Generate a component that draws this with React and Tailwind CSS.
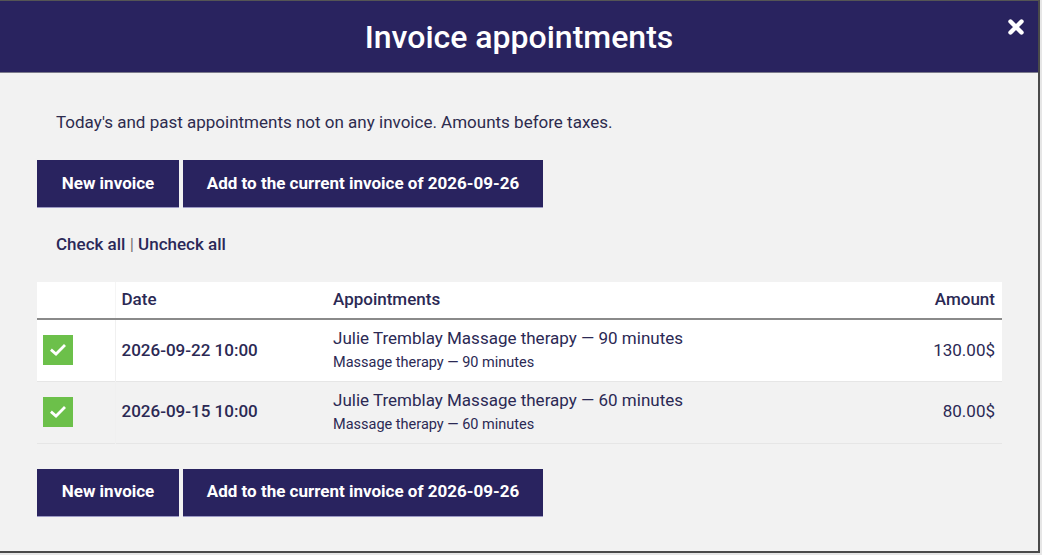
import React from "react";

const navy = "bg-[#29235f]";

function Check() {
  return (
    <div className="w-[30px] h-[30px] bg-[#6cc04a] flex items-center justify-center">
      <svg width="18" height="18" viewBox="0 0 18 18">
        <polyline points="3,9.5 7,13 15,5" fill="none" stroke="white" strokeWidth="2.8" strokeLinecap="square" />
      </svg>
    </div>
  );
}

function Buttons() {
  return (
    <div className="flex gap-[4px]">
      <button className={`${navy} text-white font-bold text-[17px] h-[48px] w-[142px] border-b border-[#9c99c4]`}>New invoice</button>
      <button className={`${navy} text-white font-bold text-[17px] h-[48px] w-[360px] border-b border-[#9c99c4]`}>Add to the current invoice of 2026-09-26</button>
    </div>
  );
}

const rows = [
  { date: "2026-09-22 10:00", title: "Julie Tremblay Massage therapy — 90 minutes", sub: "Massage therapy — 90 minutes", amount: "130.00$", bg: "bg-white" },
  { date: "2026-09-15 10:00", title: "Julie Tremblay Massage therapy — 60 minutes", sub: "Massage therapy — 60 minutes", amount: "80.00$", bg: "bg-[#f2f2f2]" },
];

export default function App() {
  return (
    <div className="w-[1042px] h-[555px] bg-[#e6e6e6] overflow-hidden" style={{ fontFamily: "Roboto, 'Noto Sans', sans-serif" }}>
      <div className="w-[1040px] h-[553px] bg-[#f2f2f2] border-r-2 border-b-2 border-[#4a4a4a] border-t border-t-[#555] flex flex-col text-[#2b2954]">
        <div className={`relative ${navy} h-[72px] shrink-0 flex items-center justify-center border-b border-[#7c7b8c]`}>
          <h1 className="text-white text-[32px] font-medium leading-none">Invoice appointments</h1>
          <div className="absolute right-[12px] top-[16px] w-[20px] h-[20px] flex items-center justify-center">
            <svg width="18" height="18" viewBox="0 0 18 18">
              <path d="M3.5 3.5 L14.5 14.5 M14.5 3.5 L3.5 14.5" stroke="white" strokeWidth="4.4" strokeLinecap="round" />
            </svg>
          </div>
        </div>
        <div className="px-[37px] flex flex-col">
          <p className="pl-[19px] pt-[39px] text-[17px] leading-[20px] text-[#2d2b4e]">Today's and past appointments not on any invoice. Amounts before taxes.</p>
          <div className="mt-[28px]">
            <Buttons />
          </div>
          <div className="pl-[19px] mt-[26px] text-[17px] leading-[20px] font-medium text-[#2a2858]">
            <span>Check all</span> <span className="font-normal text-[#777]">|</span> <span>Uncheck all</span>
          </div>
          <table className="mt-[28px] w-[965px] border-collapse text-[17px]">
            <thead>
              <tr className="bg-white h-[37px] border-b-2 border-[#8a8a8a]">
                <th className="w-[78px]"></th>
                <th className="w-[212px] text-left font-medium pl-[6px] border-l border-[#f5f5f5]">Date</th>
                <th className="w-[483px] text-left font-medium pl-[6px]">Appointments</th>
                <th className="text-right font-medium pr-[7px]">Amount</th>
              </tr>
            </thead>
            <tbody>
              {rows.map((r) => (
                <tr key={r.date} className={`${r.bg} h-[62px] border-b border-[#e6e6e6]`}>
                  <td className="pl-[6px]"><Check /></td>
                  <td className="pl-[6px] font-medium border-l border-[#f0f0f0]">{r.date}</td>
                  <td className="pl-[6px]">
                    <div className="leading-[20px] text-[17px]">{r.title}</div>
                    <div className="leading-[18px] text-[14.5px] mt-[6px]">{r.sub}</div>
                  </td>
                  <td className="text-right pr-[7px]">{r.amount}</td>
                </tr>
              ))}
            </tbody>
          </table>
          <div className="mt-[25px]">
            <Buttons />
          </div>
        </div>
      </div>
    </div>
  );
}
